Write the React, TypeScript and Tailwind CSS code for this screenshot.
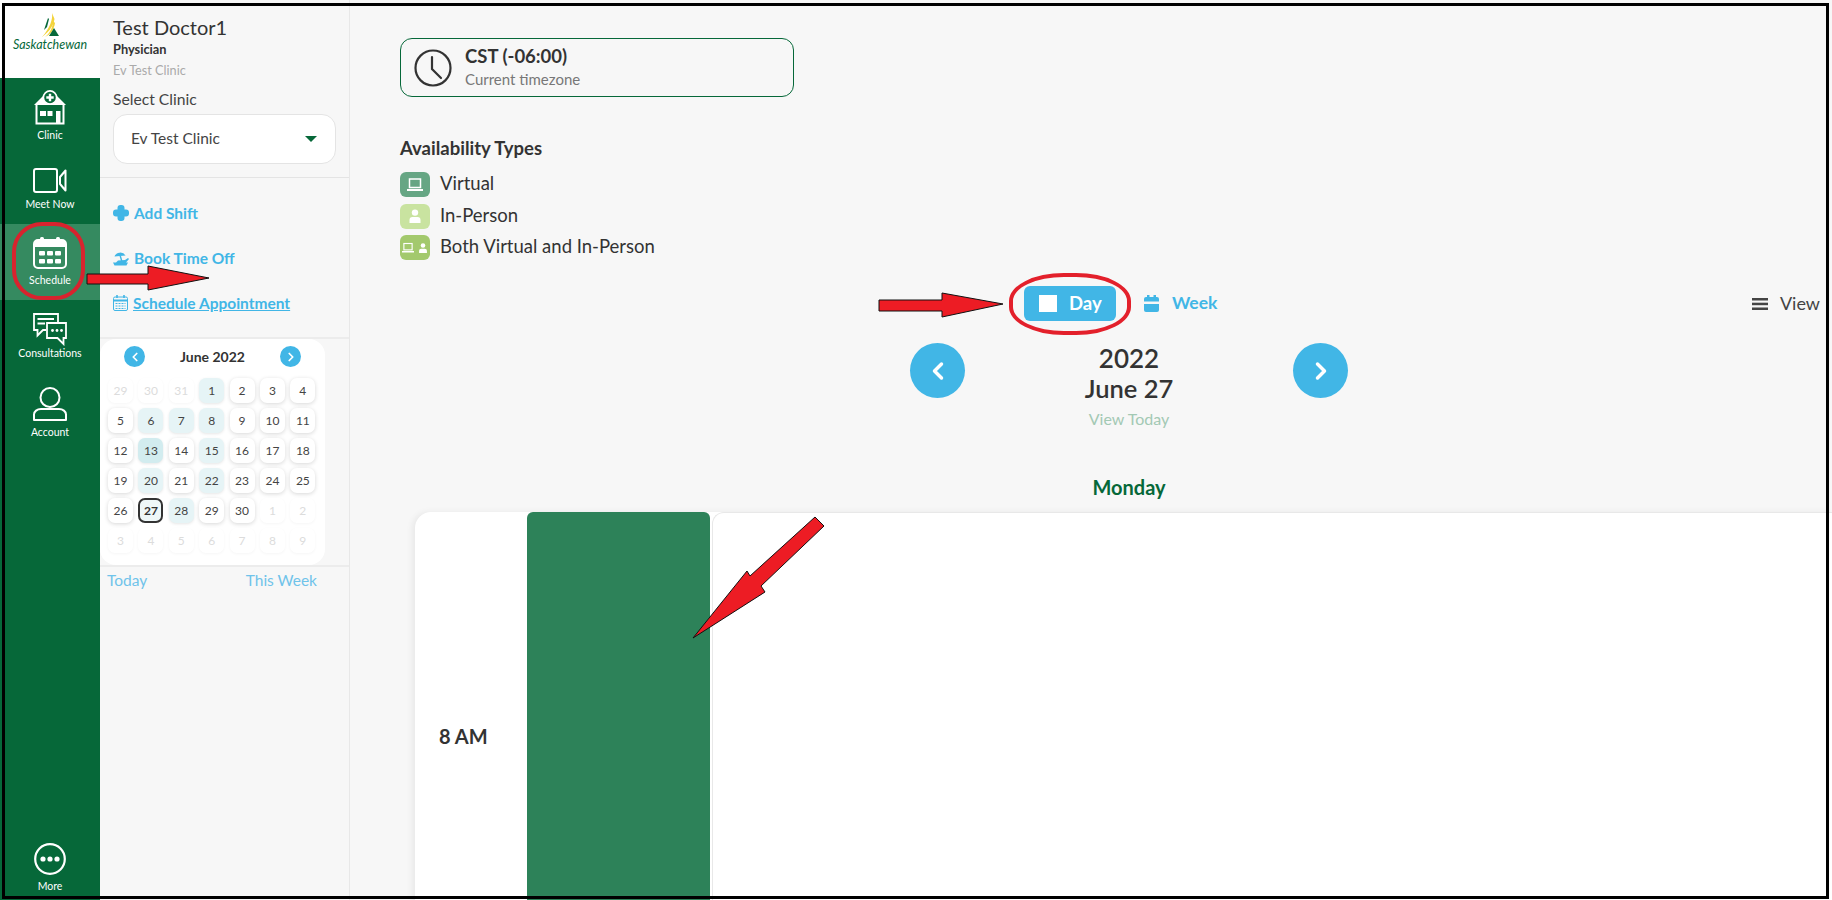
import React from "react";
import { ChevronLeft, ChevronRight } from "lucide-react";

const navIconClass = "text-white";

const ClinicIcon = () => (
  <svg width="34" height="35" viewBox="0 0 34 35" fill="none" className={navIconClass}>
    <path d="M1 15 L10 6 H24 L33 15 Z" fill="currentColor" />
    <path d="M3.5 15 V33.5 H30.5 V15" stroke="currentColor" strokeWidth="2" />
    <circle cx="17" cy="7.5" r="6.6" fill="#066839" stroke="currentColor" strokeWidth="1.6" />
    <path d="M17 3.8 V11.2 M13.3 7.5 H20.7" stroke="currentColor" strokeWidth="2.4" />
    <rect x="7" y="21" width="6" height="5" fill="currentColor" />
    <rect x="14.5" y="21" width="5" height="5" fill="currentColor" />
    <rect x="23" y="21" width="4.5" height="12" fill="currentColor" />
  </svg>
);

const VideoIcon = () => (
  <svg width="34" height="25" viewBox="0 0 34 25" fill="none" className={navIconClass}>
    <rect x="1" y="1" width="23" height="23" rx="2" stroke="currentColor" strokeWidth="2" />
    <path d="M27 9 L32.5 2.5 V22.5 L27 16 Z" stroke="currentColor" strokeWidth="2" strokeLinejoin="round" />
  </svg>
);

const CalendarIcon = () => (
  <svg width="34" height="32" viewBox="0 0 34 32" fill="none" className={navIconClass}>
    <rect x="1" y="3" width="32" height="28" rx="4" stroke="currentColor" strokeWidth="2" />
    <path d="M1 7 a4 4 0 0 1 4 -4 H29 a4 4 0 0 1 4 4 V10 H1 Z" fill="currentColor" />
    <rect x="7" y="0" width="4" height="5" rx="1.5" fill="currentColor" />
    <rect x="23" y="0" width="4" height="5" rx="1.5" fill="currentColor" />
    {[6, 14, 22].map((x) =>
      [14, 22].map((y) => <rect key={`${x}-${y}`} x={x} y={y} width="6" height="4.5" rx="1" fill="currentColor" />)
    )}
  </svg>
);

const ChatIcon = () => (
  <svg width="34" height="33" viewBox="0 0 34 33" fill="none" className={navIconClass}>
    <path d="M13 17 H10 L4.5 22.5 V17 H1 V1 H25 V9" stroke="currentColor" strokeWidth="1.8" strokeLinejoin="miter" />
    <path d="M4.5 6 H21 M4.5 10.5 H12" stroke="currentColor" strokeWidth="1.8" />
    <path d="M14 10 H33 V25 H30.5 V31 L24.5 25 H14 Z" stroke="currentColor" strokeWidth="1.8" strokeLinejoin="miter" />
    <circle cx="19.5" cy="17.5" r="1.4" fill="currentColor" />
    <circle cx="24" cy="17.5" r="1.4" fill="currentColor" />
    <circle cx="28.5" cy="17.5" r="1.4" fill="currentColor" />
  </svg>
);

const AccountIcon = () => (
  <svg width="34" height="34" viewBox="0 0 34 34" fill="none" className={navIconClass}>
    <circle cx="17" cy="10.5" r="9.5" stroke="currentColor" strokeWidth="2" />
    <path d="M8 22 H26 a7 5.5 0 0 1 7 5.5 V33 H1 V27.5 a7 5.5 0 0 1 7 -5.5 Z" stroke="currentColor" strokeWidth="2" strokeLinejoin="round" />
  </svg>
);

const MoreIcon = () => (
  <svg width="32" height="32" viewBox="0 0 32 32" fill="none" className={navIconClass}>
    <circle cx="16" cy="16" r="14.8" stroke="currentColor" strokeWidth="2.2" />
    <circle cx="9" cy="16" r="2.6" fill="currentColor" />
    <circle cx="16" cy="16" r="2.6" fill="currentColor" />
    <circle cx="23" cy="16" r="2.6" fill="currentColor" />
  </svg>
);

const LaptopIcon = ({ size = 16 }: { size?: number }) => (
  <svg width={size} height={size} viewBox="0 0 16 16" fill="none">
    <rect x="2.5" y="2" width="11" height="8.5" stroke="white" strokeWidth="1.5" />
    <rect x="0" y="12" width="16" height="2" fill="white" />
  </svg>
);

const PersonIcon = ({ size = 14 }: { size?: number }) => (
  <svg width={size} height={size} viewBox="0 0 14 14" fill="white">
    <circle cx="7" cy="3.6" r="3.2" />
    <path d="M1.5 14 V11 a3 3 0 0 1 3 -3 H9.5 a3 3 0 0 1 3 3 V14 Z" />
  </svg>
);

const navItems = [
  { label: "Clinic", icon: <ClinicIcon />, h: "h-[73px]", pt: "pt-[12px]", gap: "gap-[3px]" },
  { label: "Meet Now", icon: <VideoIcon />, h: "h-[73px]", pt: "pt-[17px]", gap: "gap-[4px]" },
  { label: "Schedule", icon: <CalendarIcon />, h: "h-[76px]", pt: "pt-[13px]", gap: "gap-[4px]", active: true },
  { label: "Consultations", icon: <ChatIcon />, h: "h-[76px]", pt: "pt-[13px]", gap: "gap-0" },
  { label: "Account", icon: <AccountIcon />, h: "h-[76px]", pt: "pt-[11px]", gap: "gap-[4px]" },
];

type DayCell = { d: number; tone?: "faded" | "tint" | "strong" | "today" };

const calendarDays: DayCell[] = [
  { d: 29, tone: "faded" }, { d: 30, tone: "faded" }, { d: 31, tone: "faded" }, { d: 1, tone: "tint" }, { d: 2 }, { d: 3 }, { d: 4 },
  { d: 5 }, { d: 6, tone: "tint" }, { d: 7, tone: "tint" }, { d: 8, tone: "tint" }, { d: 9 }, { d: 10 }, { d: 11 },
  { d: 12 }, { d: 13, tone: "strong" }, { d: 14 }, { d: 15, tone: "tint" }, { d: 16 }, { d: 17 }, { d: 18 },
  { d: 19 }, { d: 20, tone: "tint" }, { d: 21 }, { d: 22, tone: "tint" }, { d: 23 }, { d: 24 }, { d: 25 },
  { d: 26 }, { d: 27, tone: "today" }, { d: 28, tone: "tint" }, { d: 29 }, { d: 30 }, { d: 1, tone: "faded" }, { d: 2, tone: "faded" },
  { d: 3, tone: "faded" }, { d: 4, tone: "faded" }, { d: 5, tone: "faded" }, { d: 6, tone: "faded" }, { d: 7, tone: "faded" }, { d: 8, tone: "faded" }, { d: 9, tone: "faded" },
];

const dayTone = (tone?: DayCell["tone"]) => {
  switch (tone) {
    case "faded":
      return "bg-white text-[#dcdcdc] shadow-[0_1px_3px_rgba(0,0,0,0.04)]";
    case "tint":
      return "bg-[#e6f4f6] text-[#444] shadow-[0_1px_3px_rgba(0,0,0,0.1)]";
    case "strong":
      return "bg-[#d2ecef] text-[#444] shadow-[0_1px_3px_rgba(0,0,0,0.1)]";
    case "today":
      return "bg-[#eef7f8] text-[#333] font-bold border-2 border-[#333]";
    default:
      return "bg-white text-[#444] shadow-[0_1px_4px_rgba(0,0,0,0.16)]";
  }
};

const SideNav = () => (
  <div className="w-[100px] shrink-0 flex flex-col bg-[#066839] h-full">
    <div className="h-[78px] bg-white flex flex-col items-center pt-[13px]">
      <svg width="18" height="24" viewBox="0 0 18 24">
        <path d="M7 5 L3 17 L6 14 L8 6 Z" fill="#066839" />
        <path d="M11 0 C12 6 9 15 1 24 C6 20 12 15 13.5 6 Z" fill="#f3d33b" />
        <path d="M12 8 C12 14 9 20 4 24 C9 22 13 17 14 10 Z" fill="#f3d33b" />
        <path d="M13 15 L18 23 H8 Z" fill="#066839" />
      </svg>
      <span className="text-[12.5px] leading-[14px] italic text-[#066839] mt-[1px]">Saskatchewan</span>
    </div>
    {navItems.map((item) => (
      <div key={item.label} className={`${item.h} ${item.pt} ${item.gap} flex flex-col items-center ${item.active ? "bg-[#358a60]" : ""}`}>
        {item.icon}
        <span className="text-[10.5px] leading-[14px] text-white">{item.label}</span>
      </div>
    ))}
    <div className="mt-auto flex flex-col items-center gap-[4px] pb-[7px]">
      <MoreIcon />
      <span className="text-[10.5px] leading-[14px] text-white">More</span>
    </div>
  </div>
);

const ClinicPanel = () => (
  <div className="w-[250px] shrink-0 h-full border-r border-[#e8e8e8] flex flex-col">
    <div className="pl-[13px] pr-[13px] h-[178px] border-b border-[#e4e4e4] pt-[15px]">
      <div className="text-[20px] leading-[24px] text-[#333]">Test Doctor1</div>
      <div className="text-[12.8px] leading-[16px] font-bold text-[#333] mt-[2px]">Physician</div>
      <div className="text-[12.7px] leading-[16px] text-[#aaa] mt-[5px]">Ev Test Clinic</div>
      <div className="text-[15.7px] leading-[20px] text-[#444] mt-[11px]">Select Clinic</div>
      <div className="mt-[5px] h-[50px] w-[223px] bg-white border border-[#e4e4e4] rounded-[14px] flex items-center justify-between pl-[17px] pr-[18px]">
        <span className="text-[15.5px] text-[#444]">Ev Test Clinic</span>
        <span className="w-0 h-0 border-l-[6px] border-r-[6px] border-t-[6px] border-l-transparent border-r-transparent border-t-[#066839]" />
      </div>
    </div>
    <div className="h-[161px] border-b-2 border-[#ececec] pl-[13px] flex flex-col pt-[25px] gap-[25px] text-[15.5px] leading-[20px] font-bold text-[#41b6e6]">
      <div className="flex items-center gap-[5px]">
        <svg width="16" height="16" viewBox="0 0 16 16" fill="#41b6e6">
          <path d="M4.5 3 a3 3 0 0 1 3 -3 H8.5 a3 3 0 0 1 3 3 V4.5 H13 a3 3 0 0 1 3 3 V8.5 a3 3 0 0 1 -3 3 H11.5 V13 a3 3 0 0 1 -3 3 H7.5 a3 3 0 0 1 -3 -3 V11.5 H3 a3 3 0 0 1 -3 -3 V7.5 a3 3 0 0 1 3 -3 H4.5 Z" />
        </svg>
        Add Shift
      </div>
      <div className="flex items-center gap-[5px]">
        <svg width="16" height="16" viewBox="0 0 16 16" fill="#41b6e6">
          <path d="M1.5 6.5 a6 5.5 0 0 1 11 -1 Z" />
          <path d="M6.5 6 L8 11 H9.5 L8 6 Z" />
          <path d="M0 12.5 H3 L5 10.5 L12 10 L15 8 L16 9 L13 12.5 H15 L13.5 15.5 H1.5 Z" />
        </svg>
        Book Time Off
      </div>
      <div className="flex items-center gap-[5px]">
        <svg width="15" height="16" viewBox="0 0 15 16" fill="none" stroke="#41b6e6">
          <rect x="0.5" y="2" width="14" height="13.5" rx="1.5" />
          <path d="M0.5 5.5 H14.5" strokeWidth="2" />
          <path d="M4 0 V3 M11 0 V3" strokeWidth="1.6" />
          <path d="M2.5 8.5 H12.5 M2.5 11 H12.5 M2.5 13.5 H12.5" strokeDasharray="2 1" />
        </svg>
        <span className="underline">Schedule Appointment</span>
      </div>
    </div>
    <div className="h-[226px] w-[225px] bg-white rounded-2xl pt-[7px] shrink-0">
      <div className="flex items-center justify-center h-[21px]">
        <span className="w-[21px] h-[21px] rounded-full bg-[#41b6e6] flex items-center justify-center">
          <ChevronLeft size={14} strokeWidth={3} color="white" />
        </span>
        <span className="w-[135px] text-center text-[14px] font-bold text-[#333]">June 2022</span>
        <span className="w-[21px] h-[21px] rounded-full bg-[#41b6e6] flex items-center justify-center">
          <ChevronRight size={14} strokeWidth={3} color="white" />
        </span>
      </div>
      <div className="grid grid-cols-7 gap-y-[5px] gap-x-[5.75px] pl-[8px] mt-[11px] w-[215px]">
        {calendarDays.map((cell, i) => (
          <div key={i} className={`h-[25px] w-[25px] rounded-[7px] flex items-center justify-center text-[12px] ${dayTone(cell.tone)}`}>
            {cell.d}
          </div>
        ))}
      </div>
    </div>
    <div className="border-t-2 border-[#ececec] flex justify-between pl-[7px] pr-[32px] pt-[3px] text-[15.5px] leading-[20px] text-[#6fc3ea]">
      <span>Today</span>
      <span>This Week</span>
    </div>
  </div>
);

const Legend = ({ color, label, children }: { color: string; label: string; children: React.ReactNode }) => (
  <div className="flex items-center gap-[10px] h-[25px]">
    <span className={`w-[30px] h-[25px] rounded-[6px] flex items-center justify-center gap-[4px] ${color}`}>{children}</span>
    <span className="text-[18.5px] leading-[25px] text-[#333] -mt-[2px]">{label}</span>
  </div>
);

const MainArea = () => (
  <div className="flex-1 min-w-0 h-full overflow-hidden pt-[38px]">
    <div className="ml-[50px] w-[394px] h-[59px] border border-[#066839] rounded-[12px] flex items-center pl-[13px] gap-[13px]">
      <svg width="38" height="38" viewBox="0 0 38 38" fill="none" stroke="#333" strokeWidth="2.2">
        <circle cx="19" cy="19" r="17.5" />
        <path d="M18 8 V20 L27 29" strokeLinecap="round" />
      </svg>
      <div className="flex flex-col">
        <span className="text-[18.5px] leading-[20px] font-bold text-[#333]">CST (-06:00)</span>
        <span className="text-[15px] leading-[20px] mt-[3px] text-[#777]">Current timezone</span>
      </div>
    </div>
    <div className="ml-[50px] mt-[40px] text-[18.5px] leading-[22px] font-bold text-[#333]">Availability Types</div>
    <div className="ml-[50px] mt-[13px] flex flex-col gap-[6.5px]">
      <Legend color="bg-[#66a684]" label="Virtual">
        <LaptopIcon />
      </Legend>
      <Legend color="bg-[#c9e3a0]" label="In-Person">
        <PersonIcon />
      </Legend>
      <Legend color="bg-[#a3c96d]" label="Both Virtual and In-Person">
        <LaptopIcon size={12} />
        <PersonIcon size={10} />
      </Legend>
    </div>
    <div className="mt-[26px] h-[35px] flex items-center pl-[674px] pr-[12px]">
      <div className="w-[92px] h-[35px] rounded-[6px] bg-[#41b6e6] flex items-center pl-[15px] gap-[12px]">
        <span className="w-[18px] h-[17px] bg-white" />
        <span className="text-[18.5px] font-bold text-white">Day</span>
      </div>
      <svg className="ml-[28px]" width="15" height="18" viewBox="0 0 15 18" fill="#41b6e6">
        <rect x="3" y="0" width="2.5" height="4" />
        <rect x="9.5" y="0" width="2.5" height="4" />
        <path d="M0 4 a2 2 0 0 1 2 -2 H13 a2 2 0 0 1 2 2 V6.5 H0 Z" />
        <path d="M0 9 H15 V15 a2 2 0 0 1 -2 2 H2 a2 2 0 0 1 -2 -2 Z" />
      </svg>
      <span className="ml-[13px] text-[17.5px] font-bold text-[#41b6e6]">Week</span>
      <svg className="ml-auto" width="16" height="12" viewBox="0 0 16 12" fill="#444">
        <rect width="16" height="2.5" />
        <rect y="4.7" width="16" height="2.5" />
        <rect y="9.5" width="16" height="2.5" />
      </svg>
      <span className="ml-[12px] text-[18px] text-[#444]">View</span>
    </div>
    <div className="flex items-start mt-[22px]">
      <div className="ml-[560px] w-[55px] h-[55px] rounded-full bg-[#41b6e6] flex items-center justify-center shrink-0">
        <ChevronLeft size={28} strokeWidth={3} color="white" />
      </div>
      <div className="w-[328px] flex flex-col items-center shrink-0 text-[#333]">
        <span className="text-[26px] leading-[30px] font-semibold">2022</span>
        <span className="text-[25.5px] leading-[30px] font-semibold">June 27</span>
        <span className="text-[16px] leading-[20px] mt-[6px] text-[#a3c9b4]">View Today</span>
      </div>
      <div className="w-[55px] h-[55px] rounded-full bg-[#41b6e6] flex items-center justify-center shrink-0">
        <ChevronRight size={28} strokeWidth={3} color="white" />
      </div>
    </div>
    <div className="mt-[46px] ml-[560px] w-[438px] text-center text-[20px] leading-[24px] font-bold text-[#066839]">Monday</div>
    <div className="mt-[13px] ml-[65px] h-[448px] flex bg-white rounded-tl-2xl shadow-[-3px_0_6px_rgba(0,0,0,0.06)]">
      <div className="w-[112px] h-[448px] flex items-center pl-[24px] text-[20px] font-bold text-[#333] shrink-0">8 AM</div>
      <div className="w-[183px] bg-[#2d8259] rounded-t-[6px] shrink-0" />
      <div className="flex-1 ml-[2px] border-l border-t border-[#e8e8e8] rounded-tl-xl" />
    </div>
  </div>
);

// screenshot annotations drawn on top of the page
const Annotations = () => (
  <>
    <div className="absolute left-[2px] top-[3px] w-[1827px] h-[896px] border-[3px] border-black pointer-events-none" />
    <div className="absolute left-[12px] top-[222px] w-[73px] h-[78px] rounded-[30px] border-[4px] border-[#d8232e]" />
    <div className="absolute left-[1009px] top-[273px] w-[122px] h-[62px] rounded-[45%] border-[4px] border-[#e3202b]" />
    <svg className="absolute left-0 top-0 pointer-events-none" width="1832" height="900" viewBox="0 0 1832 900">
      <polygon points="87,274 148,274 148,266 209,278 148,290 148,284 87,284" fill="#ed1c24" stroke="#111" strokeWidth="1" />
      <polygon points="879,300 942,300 942,293 1003,304 942,317 942,311 879,311" fill="#ed1c24" stroke="#111" strokeWidth="1" />
      <polygon points="693,638 747,571 750,576 815,517 824,526 761,586 765,592" fill="#ed1c24" stroke="#111" strokeWidth="1" />
    </svg>
  </>
);

export default function App() {
  return (
    <div className="relative w-[1832px] h-[900px] overflow-hidden flex bg-[#f7f7f7] font-['Lato',sans-serif]">
      <SideNav />
      <ClinicPanel />
      <MainArea />
      <Annotations />
    </div>
  );
}
